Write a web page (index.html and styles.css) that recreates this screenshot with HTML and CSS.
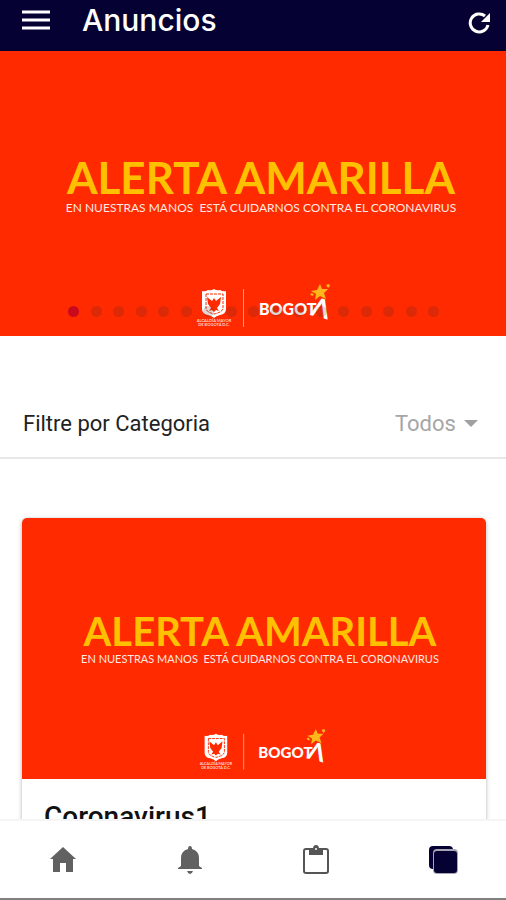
FILE: index.html
```
<!DOCTYPE html>
<html lang="es">

<head>
   <meta charset="UTF-8">
   <meta name="viewport" content="width=device-width, initial-scale=1.0">
   <title>Anuncios</title>
   <link rel="stylesheet" href="styles.css">
</head>

<body>
   <!-- Shared logo artwork -->
   <svg class="sprite" aria-hidden="true">
      <symbol id="logos" viewBox="0 0 140 44">
         <path fill="#fff" d="M7 5q3 1 6-1 3 1 6-1 3 2 6 1 3 2 6 1v18q0 5-6 6-4 1-6 3-2-2-6-3-6-1-6-6z" />
         <path fill="none" stroke="#ff2a00" stroke-width="1" d="M11 8h17v14q0 4-9 6-8-2-8-6z" stroke-dasharray="3 1" />
         <path fill="#ff2a00" d="M12 11l5 4 2-3 2 3 5-4-1 7-3 4 2 3-3-1-2 2-2-2-3 1 2-3-3-4z" />
         <text class="logo-small" x="19" y="36" text-anchor="middle">ALCALDÍA MAYOR</text>
         <text class="logo-small" x="19" y="40" text-anchor="middle">DE BOGOTÁ D.C.</text>
         <path stroke="#ff9a80" stroke-width="1" d="M48.500 3v38" />
         <text class="logo-city" x="64" y="29">BOGOT</text>
         <text class="logo-accent" transform="translate(115 29) rotate(14)">Λ</text>
         <path fill="#fdb71a" d="M125 -2l2 5 6 0-4 4 2 6-6-3-5 4 1-6-5-3 6-1zM131 -1l3-1 1 2-2 2zM115 8l2-1 2 2-2 1z" />
      </symbol>
   </svg>

   <header class="header">
      <button class="icon-button" aria-label="Menú">
         <svg width="28" height="20" viewBox="0 0 28 20">
            <path d="M0 2h28M0 10h28M0 18h28" stroke="#fff" stroke-width="3" />
         </svg>
      </button>
      <h1>Anuncios</h1>
      <button class="icon-button reload" aria-label="Recargar">
         <svg width="22" height="22" viewBox="0 0 22 22">
            <path d="M20 13a9 9 0 1 1-3-9" fill="none" stroke="#fff" stroke-width="3" />
            <path d="M22 1v9h-9z" fill="#fff" />
         </svg>
      </button>
   </header>

   <main class="content">
      <section class="banner carousel">
         <h2>ALERTA AMARILLA</h2>
         <p>EN NUESTRAS MANOS &nbsp;ESTÁ CUIDARNOS CONTRA EL CORONAVIRUS</p>
         <svg class="logos" viewBox="0 0 140 44" role="img" aria-label="Alcaldía Mayor de Bogotá"><use href="#logos" /></svg>
         <div class="dots">
            <span class="dot active"></span><span class="dot"></span><span class="dot"></span>
            <span class="dot"></span><span class="dot"></span><span class="dot"></span>
            <span class="dot"></span><span class="dot"></span><span class="dot"></span>
            <span class="dot"></span><span class="dot"></span><span class="dot"></span>
            <span class="dot"></span><span class="dot"></span><span class="dot"></span>
            <span class="dot"></span><span class="dot"></span>
         </div>
      </section>

      <div class="filter">
         <label for="category">Filtre por Categoria</label>
         <div class="select-box">
            <select id="category">
               <option>Todos</option>
            </select>
            <svg width="14" height="8" viewBox="0 0 14 8"><path d="M0 0h14L7 7z" fill="#a0a0a0" /></svg>
         </div>
      </div>

      <article class="card">
         <div class="banner">
            <h2>ALERTA AMARILLA</h2>
            <p>EN NUESTRAS MANOS &nbsp;ESTÁ CUIDARNOS CONTRA EL CORONAVIRUS</p>
            <svg class="logos" viewBox="0 0 140 44" role="img" aria-label="Alcaldía Mayor de Bogotá"><use href="#logos" /></svg>
         </div>
         <h3>Coronavirus1</h3>
      </article>
   </main>

   <nav class="tabs">
      <a href="#inicio" aria-label="Inicio">
         <svg width="28" height="28" viewBox="0 0 28 28">
            <path d="M14 1L1 13h3v13h7v-9h6v9h7V13h3z" fill="#616161" />
         </svg>
      </a>
      <a href="#notificaciones" aria-label="Notificaciones">
         <svg width="28" height="28" viewBox="0 0 28 28">
            <path d="M14 0q2 0 2 3 7 2 7 9v8l3 2v1H2v-1l3-2v-8q0-7 7-9 0-3 2-3zM11 25h6q-1 3-3 3t-3-3z" fill="#616161" />
         </svg>
      </a>
      <a href="#tareas" aria-label="Tareas">
         <svg width="28" height="30" viewBox="0 0 28 30">
            <rect x="2" y="4" width="24" height="24" rx="2" fill="none" stroke="#555" stroke-width="2" />
            <path d="M7 4h4q0-4 3-4t3 4h4v6H7z" fill="#555" />
            <circle cx="14" cy="4" r="1" fill="#fff" />
         </svg>
      </a>
      <a href="#anuncios" aria-label="Anuncios">
         <svg width="30" height="30" viewBox="0 0 30 30">
            <rect x="1" y="1" width="24" height="23" rx="4" fill="#050233" />
            <rect x="5" y="4" width="25" height="25" rx="4" fill="#a5a5b4" />
            <rect x="6" y="6" width="23" height="22" rx="3" fill="#050233" />
         </svg>
      </a>
   </nav>
</body>

</html>
```
FILE: styles.css
```
* {
   box-sizing: border-box;
}

body {
   display: flex;
   flex-direction: column;
   height: 100vh;
   margin: 0;
   background-color: #fff;
   font-family: Roboto, sans-serif;
}

h1, h2, h3, p {
   margin: 0;
}

.sprite {
   display: none;
}

/* Top bar */
.header {
   display: flex;
   align-items: center;
   gap: 32px;
   padding: 0 16px 11px 22px;
   background-color: #050233;
   color: #fff;
}

.header h1 {
   font-family: Inter, sans-serif;
   font-size: 30px;
   font-weight: 500;
   line-height: 40px;
}

.icon-button {
   display: flex;
   padding: 0;
   border: none;
   background: none;
   cursor: pointer;
}

.reload {
   margin-left: auto;
   padding-top: 6px;
}

.content {
   flex: 1;
   min-height: 0;
   overflow: hidden;
}

/* Red announcement picture */
.banner {
   display: flex;
   flex-direction: column;
   align-items: center;
   aspect-ratio: 16 / 9;
   padding-top: 92px;
   padding-left: 12px;
   background-color: #ff2a00;
   color: #ffe9e0;
   font-family: Lato, sans-serif;
   font-size: 11px;
   line-height: 14px;
   white-space: nowrap;
}

.banner h2 {
   color: #ffc000;
   font-size: 40px;
   font-weight: 700;
   line-height: 42px;
}

.banner .logos {
   width: 132px;
   margin-top: auto;
   margin-bottom: 6px;
   margin-left: 8px;
   overflow: visible;
}

.carousel {
   position: relative;
   width: 100%;
   padding-top: 102px;
   padding-left: 16px;
   font-size: 12px;
}

.carousel h2 {
   font-size: 44px;
   line-height: 48px;
}

.carousel .logos {
   width: 140px;
}

symbol {
   overflow: visible;
}

.logo-small {
   fill: #ffd5ca;
   font-family: Lato, sans-serif;
   font-size: 4px;
   font-weight: 700;
}

.logo-city {
   fill: #fff;
   font-family: Lato, sans-serif;
   font-size: 16px;
   font-weight: 900;
}

.logo-accent {
   fill: #fff;
   font-family: Lato, sans-serif;
   font-size: 26px;
   font-weight: 700;
}

.dots {
   position: absolute;
   right: 67px;
   bottom: 19px;
   left: 68px;
   display: flex;
   justify-content: space-between;
}

.dot {
   width: 11px;
   height: 11px;
   border-radius: 50%;
   background-color: rgba(60, 40, 40, 0.18);
}

.dot.active {
   background-color: #c90a1c;
}

/* Category filter */
.filter {
   display: flex;
   align-items: center;
   justify-content: space-between;
   padding: 71px 28px 16px 23px;
   border-bottom: 2px solid #e8e8e8;
   color: #222;
   font-size: 22px;
   line-height: 34px;
}

.select-box {
   display: flex;
   align-items: center;
   gap: 8px;
}

.select-box select {
   padding: 0;
   border: none;
   background: none;
   color: #a6a6a6;
   font: inherit;
   appearance: none;
}

/* Announcement card */
.card {
   margin: 59px 20px 0 22px;
   border-radius: 5px;
   overflow: hidden;
   box-shadow: 0 1px 4px rgba(0, 0, 0, 0.3);
}

.card h3 {
   padding: 20px 22px;
   color: #111;
   font-size: 28px;
   font-weight: 500;
   line-height: 36px;
}

/* Bottom tabs */
.tabs {
   display: flex;
   padding: 24px 0 23px;
   border-top: 2px solid #f5f5f5;
   border-bottom: 2px solid #808080;
   background-color: #fff;
}

.tabs a {
   display: flex;
   flex: 1;
   align-items: center;
   justify-content: center;
}
```
